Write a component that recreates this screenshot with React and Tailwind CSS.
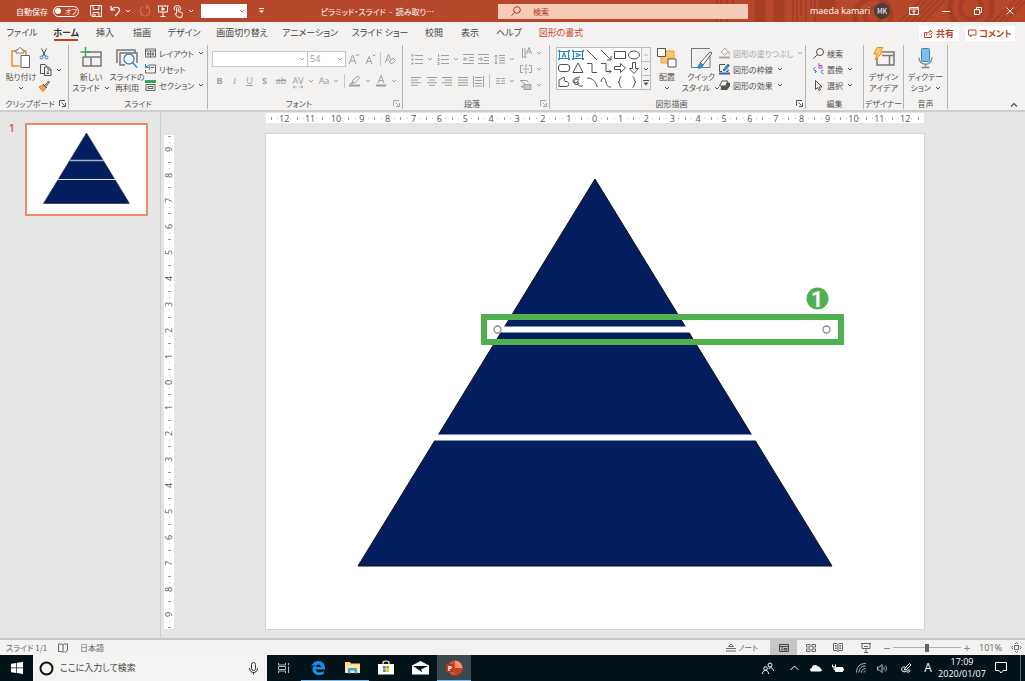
import { useState } from "react";

const tabs = [
  { label: "ファイル", width: "w-11" },
  { label: "ホーム", width: "w-11" },
  { label: "挿入", width: "w-[34px]" },
  { label: "描画", width: "w-10" },
  { label: "デザイン", width: "w-11" },
  { label: "画面切り替え", width: "w-[72px]" },
  { label: "アニメーション", width: "w-16" },
  { label: "スライド ショー", width: "w-[76px]" },
  { label: "校閲", width: "w-8" },
  { label: "表示", width: "w-10" },
  { label: "ヘルプ", width: "w-[38px]" },
  { label: "図形の書式", width: "w-[66px]" },
];

const Icon = ({ w = 12, h = 12, className = "", children }) => (
  <svg
    width={w}
    height={h}
    viewBox={`0 0 ${w} ${h}`}
    fill="none"
    stroke="currentColor"
    strokeWidth="1"
    className={`shrink-0 ${className}`}
    aria-hidden="true"
  >
    {children}
  </svg>
);

const Chevron = ({ className = "" }) => (
  <Icon w={6} h={4} className={className}>
    <path d="M1 1l2 2 2-2" />
  </Icon>
);

const Launcher = ({ className = "" }) => (
  <button aria-label="詳細" className={`absolute right-0.5 bottom-0.5 ${className}`}>
    <Icon w={7} h={7}>
      <path d="M.5 6V.5H6M2.500 2.500l3 3M6.500 3v3.500H3" />
    </Icon>
  </button>
);

const Group = ({ label, width, launcher, children }) => (
  <section className={`relative flex h-16 shrink-0 flex-col border-r border-[#b8b6b4] ${width}`}>
    <div className="flex h-[53px]">{children}</div>
    <div className="text-center text-[8px] leading-[11px] whitespace-nowrap text-[#555]">{label}</div>
    {launcher && <Launcher className={launcher} />}
  </section>
);

const BigButton = ({ icon, lines, arrow, width }) => (
  <button className={`flex h-[53px] shrink-0 flex-col items-center pt-0.5 ${width}`}>
    {icon}
    <span className="mt-0.5 text-[8px] leading-[11px] whitespace-nowrap">{lines[0]}</span>
    <span className="flex h-[11px] items-center gap-1 text-[8px] leading-[11px] whitespace-nowrap">
      {lines[1]}
      {arrow && <Chevron />}
    </span>
  </button>
);

const SmallButton = ({ icon, label, arrow, className = "" }) => (
  <button className={`flex h-4 items-center gap-[3px] text-[8px] leading-[11px] whitespace-nowrap ${className}`}>
    {icon}
    {label}
    {arrow && <Chevron className="ml-px" />}
  </button>
);

const ToolButton = ({ label, width, children }) => (
  <button aria-label={label} className={`flex h-4 shrink-0 items-center justify-center gap-1 ${width}`}>
    {children}
  </button>
);

const Divider = ({ className = "" }) => <span className={`h-[14px] w-px shrink-0 bg-[#c8c6c4] ${className}`} />;

const Lines = ({ rows }) => (
  <Icon w={11} h={11}>
    {rows.map(([x, len], i) => (
      <path key={i} d={`M${x} ${1.5 + i * 2.6}h${len}`} />
    ))}
  </Icon>
);

const TitleBar = () => (
  <header className="relative flex h-[22px] items-center overflow-hidden bg-[#b7472a] text-white">
    <svg className="absolute top-0 right-0" width="316" height="22" viewBox="0 0 316 22" fill="none" stroke="#9f3b21" aria-hidden="true">
      <path d="M8 0v22M12 0v22M18 0v22M24 0v14" strokeWidth="2" opacity=".7" />
      <path d="M51 0v22M70 0v22" strokeWidth="11" opacity=".7" />
      <path d="M84 0v22M88 0v22M92 0v16M97 0v22M102 0v12M106 0v22" strokeWidth="2" opacity=".7" />
      <circle cx="118" cy="4" r="9" fill="#9f3b21" stroke="none" opacity=".7" />
      <circle cx="164" cy="16" r="18" strokeWidth="5" opacity=".7" />
      <circle cx="164" cy="16" r="8" strokeWidth="4" opacity=".7" />
      <path d="M190 22l22-22M196 22l22-22M202 22l22-22M208 22l22-22M214 22l22-22" strokeWidth="2" opacity=".7" />
      <circle cx="262" cy="8" r="21" strokeWidth="5" opacity=".7" />
      <circle cx="262" cy="8" r="11" strokeWidth="4" opacity=".7" />
      <path d="M284 22l22-22M290 22l22-22M296 22l22-22" strokeWidth="2" opacity=".7" />
    </svg>
    <div className="relative flex w-[258px] shrink-0 items-center pl-4">
      <span className="w-[37px] text-[8px] leading-[11px] whitespace-nowrap">自動保存</span>
      <button className="flex h-[11px] w-[26px] items-center justify-center gap-1 rounded-full border border-white text-[7px] leading-[9px]">
        <span className="size-1.5 shrink-0 rounded-full bg-white" />
        オフ
      </button>
      <div className="ml-[10px] flex items-center">
        <ToolButton label="保存" width="w-[14px]">
          <Icon w={12} h={12}>
            <path d="M.5.5h11v11H2l-1.500-1.500zM3 .5v4h6v-4M3 11.500V7.500h6v4M5 9v2" />
          </Icon>
        </ToolButton>
        <ToolButton label="元に戻す" width="ml-1 w-[27px]">
          <Icon w={11} h={12}>
            <path d="M1 1v4h4M1.200 4.800C3.500 1.500 9.500 1.200 9.500 5c0 2-2 3.500-4.500 6" strokeWidth="1.200" />
          </Icon>
          <Chevron />
        </ToolButton>
        <ToolButton label="やり直し" width="w-[22px]">
          <Icon w={12} h={12} className="text-[#e0694c]">
            <path d="M7.500 4V1h3M8 1.500C12.500 4 11 11 6 11S-.5 4 4 1.500" strokeWidth="1.200" />
          </Icon>
        </ToolButton>
        <ToolButton label="最初から" width="w-[14px]">
          <Icon w={12} h={12}>
            <path d="M.5 1h11M1.500 1v6h9V1M6 7v4M3.500 11.500h5" />
            <path d="M5 2.500L7.500 4 5 5.500z" fill="currentColor" />
          </Icon>
        </ToolButton>
        <ToolButton label="タッチ/マウス モード" width="w-[27px]">
          <Icon w={11} h={13}>
            <path d="M1.800 5.500a3.200 3.200 0 1 1 5.200 0M3.500 8.500V3.300c0-1.200 1.800-1.200 1.800 0V6.500l3.500 1c1 .4.700 3-.3 4.800H5L2 9.300c0-1 1-1 1.500-.2z" />
          </Icon>
          <Chevron />
        </ToolButton>
      </div>
      <div className="relative ml-1 h-[14px] w-[46px] shrink-0 bg-white text-[#d9623b]">
        <select aria-label="スタイル" className="h-full w-full appearance-none outline-none">
          <option></option>
        </select>
        <Chevron className="pointer-events-none absolute top-[5px] right-0.5" />
      </div>
    </div>
    <div className="relative flex min-w-0 flex-1 items-center">
      <button aria-label="クイック アクセス ツール バーのユーザー設定">
        <Icon w={7} h={6}>
          <path d="M1 .5h5" />
          <path d="M1 2.500h5L3.500 5z" fill="currentColor" stroke="none" />
        </Icon>
      </button>
      <h1 className="flex-1 pr-2 text-center text-[8px] leading-[11px] whitespace-nowrap">
        ピラミッド・スライド&nbsp; -&nbsp; 読み取り…
      </h1>
    </div>
    <label className="relative flex h-[15px] w-[250px] shrink-0 items-center gap-3 bg-[#f8cbb9] pl-[13px] text-[#a33b20]">
      <Icon w={10} h={10}>
        <circle cx="6" cy="4" r="3.300" />
        <path d="M3.700 6.300L.5 9.500" />
      </Icon>
      <input
        type="text"
        aria-label="検索"
        placeholder="検索"
        className="min-w-0 flex-1 bg-transparent text-[8px] leading-[11px] outline-none placeholder:text-[#a33b20]"
      />
    </label>
    <div className="relative flex w-[277px] shrink-0 items-center pl-[62px]">
      <span className="w-16 font-['Open_Sans','Noto_Sans_CJK_JP',sans-serif] text-[9px] whitespace-nowrap">maeda kamari</span>
      <span className="flex size-4 items-center justify-center rounded-full bg-[#4a3f3a] text-[7px]">MK</span>
      <ToolButton label="リボンの表示オプション" width="w-12">
        <Icon w={10} h={8}>
          <path d="M.5.5h9v7h-9zM.5 2h9M5 7V3.500M3.500 5L5 3.500 6.500 5" />
        </Icon>
      </ToolButton>
      <ToolButton label="最小化" width="w-4">
        <Icon w={8} h={8}>
          <path d="M0 4.500h8" />
        </Icon>
      </ToolButton>
      <ToolButton label="元に戻す(縮小)" width="w-12">
        <Icon w={8} h={8}>
          <path d="M.5 2.500h5v5h-5zM2.500 2V.5h5v5H6" />
        </Icon>
      </ToolButton>
      <ToolButton label="閉じる" width="w-4">
        <Icon w={8} h={8}>
          <path d="M.5.5l7 7M7.500.5l-7 7" />
        </Icon>
      </ToolButton>
    </div>
  </header>
);

const TabBar = ({ active, onSelect }) => (
  <nav className="flex h-[22px] items-center bg-[#f3f2f1]">
    {tabs.map((tab) => (
      <button
        key={tab.label}
        onClick={() => onSelect(tab.label)}
        className={`relative h-full shrink-0 text-[9px] leading-[20px] whitespace-nowrap ${tab.width} ${
          active === tab.label ? "font-bold text-[#333]" : tab.label === "図形の書式" ? "text-[#c8482a]" : "text-[#444]"
        }`}
      >
        {tab.label}
        {active === tab.label && <span className="absolute inset-x-2.5 bottom-[3px] h-0.5 bg-[#c43e1c]" />}
      </button>
    ))}
    <div className="ml-auto flex gap-1.5 pr-[10px] text-[9px] leading-[15px] font-bold text-[#b7472a]">
      <button className="flex h-[15px] w-10 items-center justify-center gap-[3px] bg-white">
        <Icon w={9} h={9}>
          <path d="M3 3.500H.5v5h7V6M2.500 6.500c0-2.500 1-3.500 3.500-3.500V1l2.500 2.500L6 6V4.500" />
        </Icon>
        共有
      </button>
      <button className="flex h-[15px] w-[50px] items-center justify-center gap-0.5 bg-white whitespace-nowrap">
        <Icon w={9} h={9}>
          <path d="M.5 1h7.500v5H4L2.500 7.800V6h-2z" />
        </Icon>
        コメント
      </button>
    </div>
  </nav>
);

const shapes = [
  <g key="a" stroke="#2b7fc3"><path d="M1.500 2.500h9v7h-9z" /><path d="M4 8.500L6 3.500l2 5M4.800 7h2.400" /><path d="M0 1h2v2H0zM10 1h2v2h-2zM0 9h2v2H0zM10 9h2v2h-2z" fill="#2b9be0" stroke="none" /></g>,
  <g key="b" stroke="#2b7fc3"><path d="M1.500 2.500h9v7h-9z" /><path d="M3.500 4L8.500 6l-5 2M5 4.800v2.400" /><path d="M0 1h2v2H0zM10 1h2v2h-2zM0 9h2v2H0zM10 9h2v2h-2z" fill="#2b9be0" stroke="none" /></g>,
  <path key="c" d="M1 1l10 10" />,
  <path key="d" d="M1 1l10 10M11 7v4H7" />,
  <path key="e" d="M.5 2.500h11v7H.5z" />,
  <ellipse key="f" cx="6" cy="6" rx="5.500" ry="4" />,
  <rect key="g" x=".5" y="2.500" width="11" height="7" rx="2.500" />,
  <path key="h" d="M6 1l5 9.500H1z" />,
  <path key="i" d="M1 1.500h5v9h5" />,
  <path key="j" d="M1 1.500h5v8h5M9 7.500l2 2-2 2" />,
  <path key="k" d="M.5 4.500h6v-3L11.500 6l-5 4.500v-3h-6z" />,
  <path key="l" d="M4.500.5h3v6h3L6 11.500 1.500 6.500h3z" />,
  <path key="m" d="M1 10.500V4l5-3c2 0-1 4 1 4.500h2c2 1 3 5-1 5z" />,
  <path key="n" d="M8 1C3 1-1 5 2 6.500S9 2 5 3 1 8 4 8.500 8 6 6 6.500 7 12 11 9.500" />,
  <path key="o" d="M1 2c6 0 9 4 10 9" />,
  <path key="p" d="M1 6c1-6 4-5 5 0s3 5 5 5" />,
  <path key="q" d="M7.500.5C4.500.5 7 6 4 6c3 0 .5 5.500 3.500 5.500" />,
  <path key="r" d="M4.500.5C7.500.5 5 6 8 6c-3 0-.5 5.500-3.500 5.500" />,
];

const Ribbon = () => (
  <div className="relative flex h-[68px] border-b-2 border-[#d0cecc] bg-[#f3f2f1] pt-px text-[#505050]">
    <Group label="クリップボード" width="w-[69px] pr-2" launcher="text-[#555]">
      <BigButton
        width="w-[38px] ml-0.5"
        lines={["貼り付け", ""]}
        arrow
        icon={
          <Icon w={20} h={22}>
            <path d="M5 4H1v15h8M15 8V4h-4" stroke="#e8922c" strokeWidth="1.500" />
            <path d="M5 6V3h2c0-3 4-3 4 0h2v3z" fill="#fff" stroke="#777" />
            <path d="M10 8.500h8.500v12H10z" fill="#fff" stroke="#666" />
          </Icon>
        }
      />
      <div className="pt-px">
        <ToolButton label="切り取り" width="w-2">
          <Icon w={10} h={12}>
            <path d="M2.500.5l4 8M7.500.5l-4 8" />
            <circle cx="2.500" cy="9.500" r="1.500" stroke="#2b7fc3" />
            <circle cx="7.500" cy="9.500" r="1.500" stroke="#2b7fc3" />
          </Icon>
        </ToolButton>
        <ToolButton label="コピー" width="w-[22px]">
          <Icon w={12} h={12}>
            <path d="M4 9.500H.5v-9H5l2 2M4.500 3h4L11 5.500v6H4.500zM8 3v3h3M6.500 8h2.500M6.500 9.500h2.500" />
          </Icon>
          <Chevron />
        </ToolButton>
        <ToolButton label="書式のコピー" width="w-2">
          <Icon w={12} h={12}>
            <path d="M1 7l4-2 3 3-3 3.500z" fill="#f3a64c" stroke="#d9782c" />
            <path d="M5 4l4 4M7 5.500L10.500 1l1 1L8 6.500" />
          </Icon>
        </ToolButton>
      </div>
    </Group>

    <Group label="スライド" width="w-[139px]">
      <BigButton
        width="w-9 ml-1"
        lines={["新しい", "スライド"]}
        arrow
        icon={
          <Icon w={22} h={22}>
            <path d="M7 5h14v14H3v-9M3 10h18M11 10v9" stroke="#777" strokeWidth="1.500" />
            <path d="M5.500 0v10M.5 5h10" stroke="#3aa557" strokeWidth="1.500" />
          </Icon>
        }
      />
      <BigButton
        width="w-9"
        lines={["スライドの", "再利用"]}
        icon={
          <Icon w={22} h={22}>
            <path d="M2 15H1V3h18v3M9 18H4V6h17v10" stroke="#777" strokeWidth="1.500" />
            <circle cx="13" cy="12" r="5" fill="#fff" stroke="#2b8bd0" strokeWidth="1.300" />
            <path d="M16.500 15.500l4.500 5" stroke="#2b8bd0" strokeWidth="1.500" />
          </Icon>
        }
      />
      <div>
        <SmallButton
          label="レイアウト"
          arrow
          icon={<Icon w={11} h={10}><path d="M.5 1h10v8H.5zM.5 3h10M5.500 3v6M2.500 5h1.500v2H2.500zM7 5h1.500v2H7z" stroke="#666" /></Icon>}
        />
        <SmallButton
          label="リセット"
          icon={<Icon w={11} h={10}><path d="M4 1h6.500v8H.5V6M6 3.500h3" stroke="#666" /><path d="M.5 0v3.500H4M1 3c3-3 5 0 3 3" stroke="#2b7fc3" /></Icon>}
        />
        <SmallButton
          label="セクション"
          arrow
          icon={<Icon w={11} h={11}><path d="M0 1.500h11" stroke="#3aa557" strokeWidth="3" /><path d="M1 4.500h9v6H1zM3 6.500h5v2H3z" stroke="#666" /></Icon>}
        />
      </div>
    </Group>

    <Group label="フォント" width="w-[195px] pr-3" launcher="text-[#a9a7a5]">
      <div className="flex flex-col gap-1.5 pt-1.5 pl-1 text-[#a19f9d]">
        <div className="flex items-center">
          <div className="relative h-4 w-24 border border-[#c8c6c4] bg-white">
            <select aria-label="フォント" className="block h-full w-full appearance-none outline-none">
              <option></option>
            </select>
            <Chevron className="pointer-events-none absolute top-[5px] right-0.5" />
          </div>
          <div className="relative h-4 w-[38px] border border-l-0 border-[#c8c6c4] bg-white">
            <select
              aria-label="フォント サイズ"
              defaultValue="54"
              className="block h-full w-full appearance-none pl-0.5 font-['Open_Sans',sans-serif] text-[9px] leading-[14px] outline-none"
            >
              <option>54</option>
            </select>
            <Chevron className="pointer-events-none absolute top-[5px] right-0.5" />
          </div>
          <ToolButton label="フォント サイズの拡大" width="w-4">
            <Icon w={12} h={12}><path d="M1 11L4.500 2l3.500 9M2.200 8h4.600M8 3l1.500-2L11 3" /></Icon>
          </ToolButton>
          <ToolButton label="フォント サイズの縮小" width="w-4">
            <Icon w={12} h={12}><path d="M2 11l3-7.500L8 11M3 8.500h4M8.500 1.500L10 3l1.500-1.500" /></Icon>
          </ToolButton>
          <Divider className="ml-0.5" />
          <ToolButton label="書式のクリア" width="w-[18px]">
            <Icon w={12} h={12}><path d="M1 10L4.500 1.500l2 5M2.200 7h3M6 8l3-3 2.500 2.500-3 3H7L5.500 9z" /></Icon>
          </ToolButton>
        </div>
        <div className="flex items-center font-['Open_Sans',sans-serif] text-[9px] leading-4">
          <ToolButton label="太字" width="w-[15px]"><b>B</b></ToolButton>
          <ToolButton label="斜体" width="w-[15px]"><i className="font-['Liberation_Serif',serif]">I</i></ToolButton>
          <ToolButton label="下線" width="w-[15px]"><u>U</u></ToolButton>
          <ToolButton label="影" width="w-[15px]"><b>S</b></ToolButton>
          <ToolButton label="取り消し線" width="w-[18px]"><s>ab</s></ToolButton>
          <ToolButton label="文字の間隔" width="w-[26px]">
            <span className="relative leading-3">
              AV
              <Icon w={12} h={4} className="absolute -bottom-0.5 left-0"><path d="M3 .5l-2 1.500 2 1.500M1 2h4M9 .5l2 1.500-2 1.500M11 2H7" strokeWidth=".7" /></Icon>
            </span>
            <Chevron />
          </ToolButton>
          <ToolButton label="文字種の変換" width="w-[26px]">Aa<Chevron /></ToolButton>
          <Divider className="mx-0.5" />
          <ToolButton label="蛍光ペンの色" width="w-[26px]">
            <Icon w={12} h={12}><path d="M3 8l1-3 5-4 1.500 1.500L6.500 7.500zM1 8.500h3" /><path d="M0 10.500h11" strokeWidth="2" /></Icon>
            <Chevron />
          </ToolButton>
          <ToolButton label="フォントの色" width="w-[26px]">
            <Icon w={12} h={12}><path d="M3 8l3-7.500L9 8M4 5.500h4" /><path d="M1 10.500h10" strokeWidth="2" /></Icon>
            <Chevron />
          </ToolButton>
        </div>
      </div>
    </Group>

    <Group label="段落" width="w-[147px] pr-2" launcher="text-[#a9a7a5]">
      <div className="flex flex-col gap-1.5 pt-1.5 pl-1.5 text-[#a19f9d]">
        <div className="flex items-center">
          <ToolButton label="箇条書き" width="w-[26px]">
            <Icon w={12} h={11}><path d="M4 1.500h8M4 5.500h8M4 9.500h8" /><path d="M.5 1.500h2M.5 5.500h2M.5 9.500h2" strokeWidth="2" /></Icon>
            <Chevron />
          </ToolButton>
          <ToolButton label="段落番号" width="w-[26px]">
            <Icon w={12} h={11}><path d="M4 1.500h8M4 5.500h8M4 9.500h8M1.500 0v3M.5 4.500h1.500v2H.5M.5 8.500h1.500v2H.5" /></Icon>
            <Chevron />
          </ToolButton>
          <ToolButton label="インデントを減らす" width="w-[15px]">
            <Icon w={11} h={10}><path d="M0 .5h11M6 3.500h5M6 6.500h5M0 9.500h11M5 5H.5M2.500 3l-2 2 2 2" /></Icon>
          </ToolButton>
          <ToolButton label="インデントを増やす" width="w-[15px]">
            <Icon w={11} h={10}><path d="M0 .5h11M6 3.500h5M6 6.500h5M0 9.500h11M0 5h4.500M2.500 3l2 2-2 2" /></Icon>
          </ToolButton>
          <ToolButton label="行間" width="w-[26px]">
            <Icon w={11} h={11}><path d="M5 1.500h6M5 4h6M5 6.500h6M5 9h6M2 1v9M.5 2.500L2 1l1.500 1.500M.5 8.500L2 10l1.500-1.500" /></Icon>
            <Chevron />
          </ToolButton>
        </div>
        <div className="flex items-center">
          <ToolButton label="左揃え" width="w-[15px]"><Lines rows={[[0, 10], [0, 7], [0, 10], [0, 7]]} /></ToolButton>
          <ToolButton label="中央揃え" width="w-4"><Lines rows={[[0, 10], [2, 6], [0, 10], [2, 6]]} /></ToolButton>
          <ToolButton label="右揃え" width="w-[15px]"><Lines rows={[[0, 10], [3, 7], [0, 10], [3, 7]]} /></ToolButton>
          <ToolButton label="両端揃え" width="w-4"><Lines rows={[[0, 10], [0, 10], [0, 10], [0, 10]]} /></ToolButton>
          <ToolButton label="均等割り付け" width="w-[15px]">
            <Icon w={11} h={11}><path d="M.5 0v11M10.500 0v11M2 1.500h7M2 4.500h7M2 7.500h7M2 10h7" /></Icon>
          </ToolButton>
          <Divider className="mx-[3px]" />
          <ToolButton label="段の追加と削除" width="w-6">
            <Icon w={9} h={8}><path d="M0 1.500h4M0 4h4M0 6.500h4M5 1.500h4M5 4h4M5 6.500h4" /></Icon>
            <Chevron />
          </ToolButton>
        </div>
      </div>
      <div className="ml-1 text-[#a19f9d]">
        <ToolButton label="文字列の方向" width="w-5">
          <Icon w={11} h={12}><path d="M1.500 1v10M4 1v10M2.500 9.500L4 11l1.500-1.500M5.500 7L8 .5 10.500 7M6.500 5h3" /></Icon>
          <Chevron />
        </ToolButton>
        <ToolButton label="文字の配置" width="w-5">
          <Icon w={12} h={10}><path d="M3 1.500H.5v7H3M9 1.500h2.500v7H9M3 5h6M6 0v3.500M6 6.500V10" /></Icon>
          <Chevron />
        </ToolButton>
        <ToolButton label="SmartArt に変換" width="w-5">
          <Icon w={12} h={11}><path d="M0 .5h7l1 2M1 1l4 3-4 3h3" /><path d="M4 4.500h7v5H4z" fill="#c8c6c4" /></Icon>
          <Chevron />
        </ToolButton>
      </div>
    </Group>

    <Group label="図形描画" width="w-[256px] pr-3" launcher="text-[#555]">
      <div className="mt-[2px] ml-[6px] flex h-[43px] w-[95px] shrink-0 border border-[#c0bebc] bg-white">
        <div className="grid w-[84px] grid-cols-6 grid-rows-3 place-items-center">
          {shapes.map((shape, i) => (
            <button key={i} aria-label={`図形 ${i + 1}`}>
              <Icon w={12} h={12}>{shape}</Icon>
            </button>
          ))}
        </div>
        <div className="flex flex-1 flex-col divide-y divide-[#c0bebc] border-l border-[#c0bebc] bg-[#f3f2f1]">
          <button aria-label="上へ" className="flex flex-1 items-center justify-center text-[#bbb]"><Chevron className="rotate-180" /></button>
          <button aria-label="下へ" className="flex flex-1 items-center justify-center"><Chevron /></button>
          <button aria-label="その他" className="flex flex-1 items-center justify-center">
            <Icon w={6} h={6}><path d="M0 .5h6" /><path d="M.5 2.500h5L3 5.500z" fill="currentColor" stroke="none" /></Icon>
          </button>
        </div>
      </div>
      <BigButton
        width="w-8"
        lines={["配置", ""]}
        arrow
        icon={
          <Icon w={22} h={22}>
            <path d="M5 4h13v12H5z" fill="#f9c56c" stroke="#e8a03c" />
            <path d="M1.500 1.500h8v8h-8zM12 12h8v8h-8z" fill="#fff" stroke="#555" />
          </Icon>
        }
      />
      <BigButton
        width="w-9"
        lines={["クイック", "スタイル"]}
        arrow
        icon={
          <Icon w={22} h={22}>
            <path d="M20 8v12.500H1.500v-19h18.500" stroke="#777" fill="none" />
            <path d="M10 16L20 5l2 1-9 12z" fill="#fff" stroke="#555" />
            <path d="M7 20.500c2 0 1-4 4-4.500l2 2c0 3-4 4-6 2.500z" fill="#2b8bd0" stroke="#2b8bd0" />
          </Icon>
        }
      />
      <div>
        <SmallButton
          label="図形の塗りつぶし"
          arrow
          className="text-[#a9a7a5]"
          icon={<Icon w={11} h={12}><path d="M2 5l4-4 3.500 4-4 3zM9 4c2 2 1 3 1 4" /><path d="M0 10.500h11" strokeWidth="2" /></Icon>}
        />
        <SmallButton
          label="図形の枠線"
          arrow
          icon={<Icon w={11} h={12}><path d="M6 1.500H.5v7H3M9 6v2.500H7" /><path d="M4 7l5-6 1.500 1.500L5.500 8z" fill="#2b8bd0" stroke="#2b7fc3" /><path d="M0 10.500h11" stroke="#3b5f8f" strokeWidth="2" /></Icon>}
        />
        <SmallButton
          label="図形の効果"
          arrow
          icon={<Icon w={11} h={11}><path d="M4 3h6.500v3L8 9.500H2z" fill="#555" /><path d="M3 1h5.500L7 6H.5z" fill="#fff" /></Icon>}
        />
      </div>
    </Group>

    <Group label="編集" width="w-[58px]">
      <div className="pl-[7px]">
        <SmallButton label="検索" icon={<Icon w={11} h={11}><circle cx="7" cy="4" r="3.500" /><path d="M4.500 6.500L.5 10.500" /></Icon>} />
        <SmallButton
          label="置換"
          arrow
          icon={<Icon w={11} h={12}><path d="M6 0v5h3V2.500H6" stroke="#a64db8" /><path d="M2.500 4.500C0 5 .5 8 3 8.500M2 7l1.500 1.500L2 10M10.500 7.500c-3-1-3 3.500 0 3" stroke="#2b7fc3" /></Icon>}
        />
        <SmallButton label="選択" arrow icon={<Icon w={11} h={11}><path d="M2.500.5v9l2-2 1.500 3 1.500-.8L6 7h3z" /></Icon>} />
      </div>
    </Group>

    <Group label="デザイナー" width="w-10">
      <BigButton
        width="w-full"
        lines={["デザイン", "アイデア"]}
        icon={
          <Icon w={22} h={22}>
            <path d="M9 5h12v13H4v-7M9 8.500h12M16.500 8.500V18" stroke="#777" strokeWidth="1.500" />
            <path d="M4 .5h6L7.500 5H10L2 13l2-6H.8z" fill="#fbc56a" stroke="#e8922c" />
          </Icon>
        }
      />
    </Group>

    <Group label="音声" width="w-11">
      <BigButton
        width="w-full"
        lines={["ディクテー", "ション"]}
        arrow
        icon={
          <Icon w={22} h={22}>
            <rect x="6.500" y="1.500" width="8" height="13" rx="1" fill="#83bdec" stroke="#2b8bd0" />
            <path d="M4 10.500c0 9 13 9 13 0M10.500 17v3.500M6.500 20.500h8" stroke="#888" strokeWidth="1.300" />
          </Icon>
        }
      />
    </Group>
    <button aria-label="リボンを折りたたむ" className="mt-auto mr-[7px] mb-0.5 ml-auto">
      <Icon w={8} h={6}><path d="M1 4.500l3-3 3 3" strokeWidth="1.200" /></Icon>
    </button>
  </div>
);

// Marks between two figures: dot, half-way tick, dot
const buildMarks = (max) => {
  const marks = ["tick"];
  for (let n = -max; n <= max; n++) {
    marks.push("dot", Math.abs(n), "dot", "tick");
  }
  return marks;
};

const Ruler = ({ max, vertical }) => (
  <div
    className={`flex shrink-0 overflow-hidden bg-white font-['Open_Sans',sans-serif] text-[9px] leading-none text-[#555] ${
      vertical ? "w-[10px]" : "h-[10px] px-0.5"
    }`}
  >
    <div className={`flex flex-1 ${vertical ? "-my-0.5 flex-col" : ""}`}>
      {buildMarks(max).map((mark, i) => (
        <span key={i} className="flex min-h-0 min-w-0 flex-1 items-center justify-center">
          {mark === "tick" && <span className={`shrink-0 bg-[#999] ${vertical ? "h-px w-[3px]" : "h-[3px] w-px"}`} />}
          {mark === "dot" && <span className="size-px shrink-0 bg-[#bbb]" />}
          {typeof mark === "number" && <span className={vertical ? "-rotate-90" : ""}>{mark}</span>}
        </span>
      ))}
    </div>
  </div>
);

const Thumbnails = () => (
  <aside className="flex w-[161px] shrink-0 items-start border-r border-[#cfcdcb] pt-[11px] pl-[9px]">
    <span className="w-4 font-['Open_Sans',sans-serif] text-[10px] leading-[10px] font-semibold text-[#d9532c]">1</span>
    <button aria-label="スライド 1" className="w-[123px] border-2 border-[#ee8a6c] bg-white">
      <svg viewBox="0 0 119 89" className="block w-full">
        <path d="M59.500 8l43 70.500h-86z" fill="#021e5e" stroke="#222" strokeWidth=".6" />
        <path d="M43 35.500h34" stroke="#a9b3cb" strokeWidth="1.500" />
        <path d="M30 54.500h59" stroke="#e8ebf3" strokeWidth="1.200" />
      </svg>
    </button>
  </aside>
);

const Slide = () => (
  <svg viewBox="0 0 658 495" className="block w-full bg-white outline outline-[#d6d4d2]">
    <path d="M329 45l237 387H92z" fill="#021e5e" stroke="#111" strokeWidth="1" />
    <path d="M232 195.500h194" stroke="#fff" strokeWidth="6" />
    <path d="M166 303.500h326" stroke="#fff" strokeWidth="6" />
    <circle cx="231.500" cy="195.500" r="3.500" fill="#fff" stroke="#8a8a8a" strokeWidth="1.300" />
    <circle cx="560.500" cy="195.500" r="3.500" fill="#fff" stroke="#8a8a8a" strokeWidth="1.300" />
    <rect x="218" y="183" width="357" height="25" fill="none" stroke="#4fb04f" strokeWidth="6" />
    <circle cx="551.500" cy="164.500" r="11" fill="#4fb04f" />
    <text x="551" y="172.500" textAnchor="middle" fill="#fff" fontSize="22" fontWeight="bold" fontFamily="Roboto, sans-serif">
      1
    </text>
  </svg>
);

const StatusBar = ({ zoom, onZoom }) => (
  <footer className="flex h-[17px] items-center border-t-2 border-[#cbc9c7] bg-[#f3f2f1] pl-[6px] text-[8px] leading-[15px] text-[#666]">
    <span className="w-[52px] whitespace-nowrap">スライド 1/1</span>
    <Icon w={10} h={10}><path d="M5 2L3.500 1H.5v7.500h3L5 9.500M5 2l1.500-1h3v6M5 2v7.500M6.500 8.500l1 1 2-2.500" /></Icon>
    <span className="ml-3">日本語</span>
    <button className="ml-auto flex w-[44px] items-center gap-0.5 whitespace-nowrap">
      <Icon w={10} h={9}><path d="M0 5.500h10M0 8h10M2.500 3.500L5 1l2.500 2.500z" /></Icon>
      ノート
    </button>
    <button aria-label="標準" className="flex h-full w-[27px] items-center justify-center bg-[#c8c6c4] text-[#444]">
      <Icon w={10} h={8}><path d="M.5.5h9v7h-9zM.5 2.500h9M3 2.500v5M5 4.500h3v1.500H5z" /></Icon>
    </button>
    <button aria-label="スライド一覧" className="flex w-[27px] justify-center">
      <Icon w={10} h={8}><path d="M.5.5h3.500v2.500H.5zM6 .5h3.500v2.500H6zM.5 5h3.500v2.500H.5zM6 5h3.500v2.500H6z" /></Icon>
    </button>
    <button aria-label="閲覧表示" className="flex w-[27px] justify-center">
      <Icon w={10} h={9}><path d="M5 1.500L4 .5H.5v7H4l1 1 1-1h3.500v-7H6zM5 1.500v7M2 2.500h1.500M2 4h1.500M2 5.500h1.500M6.500 2.500H8M6.500 4H8M6.500 5.500H8" /></Icon>
    </button>
    <button aria-label="スライド ショー" className="flex w-[30px] justify-center">
      <Icon w={10} h={10}><path d="M0 .5h10M1 .5v5h8v-5M5 5.500v4M3 9.500h4M3 3.500h4" /></Icon>
    </button>
    <button aria-label="縮小" onClick={() => onZoom(zoom - 10)} className="flex w-3 justify-center text-[#888]">
      <Icon w={6} h={6}><path d="M0 3.500h6" /></Icon>
    </button>
    <input
      type="range"
      aria-label="ズーム"
      min="1"
      max="201"
      value={zoom}
      onChange={(e) => onZoom(Number(e.target.value))}
      className="h-[10px] w-[68px] appearance-none bg-transparent bg-[linear-gradient(#b3b1af,#b3b1af)] bg-[length:100%_1px] bg-center bg-no-repeat [&::-webkit-slider-thumb]:h-2 [&::-webkit-slider-thumb]:w-1 [&::-webkit-slider-thumb]:appearance-none [&::-webkit-slider-thumb]:bg-[#666]"
    />
    <button aria-label="拡大" onClick={() => onZoom(zoom + 10)} className="flex w-3 justify-center text-[#888]">
      <Icon w={6} h={6}><path d="M0 3.500h6M3 .5v6" /></Icon>
    </button>
    <span className="w-[38px] pl-1.5 font-['Open_Sans',sans-serif] text-[9px]">{zoom}%</span>
    <button aria-label="ウィンドウに合わせる" className="w-[14px]">
      <Icon w={11} h={11}><path d="M3.500 3.500h4v4h-4zM4 2l1.500-1.500L7 2M4 9l1.500 1.500L7 9M2 4L.5 5.500 2 7M9 4l1.500 1.500L9 7" /></Icon>
    </button>
  </footer>
);

const TaskButton = ({ label, running, active, children }) => (
  <button
    aria-label={label}
    className={`flex h-full w-[34px] items-center justify-center border-b ${running ? "border-[#76b9ed]" : "border-transparent"} ${
      active ? "bg-[#3b494f]" : ""
    }`}
  >
    {children}
  </button>
);

const Taskbar = () => (
  <div className="flex h-[26px] items-center bg-[#02141a] text-white">
    <button aria-label="スタート" className="flex w-[33px] justify-center">
      <svg width="12" height="12" viewBox="0 0 12 12" fill="#fff" aria-hidden="true">
        <path d="M0 1.700L5.300.9v4.700H0zM6 .8L12 0v5.600H6zM0 6.300h5.300V11L0 10.300zM6 6.300h6V12l-6-.9z" />
      </svg>
    </button>
    <label className="flex h-full w-[234px] items-center gap-1.5 bg-[#f3f3f2] pr-[9px] pl-[6px] text-[#333]">
      <Icon w={15} h={15}><circle cx="7.500" cy="7.500" r="6" stroke="#111" strokeWidth="2" /></Icon>
      <input
        type="text"
        aria-label="ここに入力して検索"
        placeholder="ここに入力して検索"
        className="min-w-0 flex-1 bg-transparent text-[9px] outline-none placeholder:text-[#444]"
      />
      <Icon w={9} h={13}><rect x="2.500" y=".5" width="4" height="8" rx="2" /><path d="M.5 6c0 6 8 6 8 0M4.500 10.500v2" /></Icon>
    </label>
    <TaskButton label="タスク ビュー">
      <Icon w={12} h={12} className="text-[#bbb]"><path d="M.5 1v2h7V1M.5 4.500h7v3h-7zM.5 11v-2h7v2M10.500 1v2M10.500 4.500v6.500" /></Icon>
    </TaskButton>
    <TaskButton label="Edge" running>
      <svg width="14" height="14" viewBox="0 0 14 14" aria-hidden="true">
        <path d="M.3 6.200C1 2 4 0 7.200 0 11.500 0 14 3 14 7v1.500H4.800c.2 3 4.700 3.700 8 1.700v2.700C8 15.500 1.300 13.500 1.500 8.200 1.600 5.800 3 4.500 4.500 3.800 2.500 4 1 5 .3 6.200zM4.900 6h4.900c0-3.500-4.500-3.300-4.900 0z" fill="#1e88e5" />
      </svg>
    </TaskButton>
    <TaskButton label="エクスプローラー" running>
      <svg width="15" height="13" viewBox="0 0 15 13" aria-hidden="true">
        <path d="M0 1h5l1 1.500h9V12H0z" fill="#ffd874" />
        <path d="M0 4h15v8H0z" fill="#ffe79f" />
        <path d="M3 7h9v5.500h-2.500V9.500h-4v3H3z" fill="#3fa3e8" />
      </svg>
    </TaskButton>
    <TaskButton label="ストア">
      <svg width="16" height="16" viewBox="0 0 16 16" aria-hidden="true">
        <path d="M5 5V2.500C5 .5 11 .5 11 2.500V5" fill="none" stroke="#fff" strokeWidth="1.200" />
        <path d="M0 4h16v10.500H0z" fill="#fff" />
        <path d="M5 6h2.700v2.700H5z" fill="#f25022" />
        <path d="M8.300 6H11v2.700H8.300z" fill="#7fba00" />
        <path d="M5 9.300h2.700V12H5z" fill="#00a4ef" />
        <path d="M8.300 9.300H11V12H8.300z" fill="#ffb900" />
      </svg>
    </TaskButton>
    <TaskButton label="メール">
      <svg width="17" height="14" viewBox="0 0 17 14" aria-hidden="true">
        <path d="M0 4.500L8.500 0 17 4.500V13.500H0z" fill="#fff" />
        <path d="M1 5h15L9 8.500l1.500 3z" fill="#02141a" />
      </svg>
    </TaskButton>
    <TaskButton label="PowerPoint" running active>
      <svg width="17" height="16" viewBox="0 0 17 16" aria-hidden="true">
        <circle cx="9" cy="8" r="7.500" fill="#d35230" />
        <path d="M9 .5A7.500 7.500 0 0 1 16.500 8H9z" fill="#ff8f6b" />
        <path d="M9 15.500A7.500 7.500 0 0 0 16.500 8H9z" fill="#c43e1c" />
        <rect x="0" y="4" width="8" height="8" rx="1" fill="#b7391a" />
        <text x="4" y="10.500" textAnchor="middle" fontSize="7" fontWeight="bold" fill="#fff" fontFamily="Open Sans, sans-serif">P</text>
      </svg>
    </TaskButton>

    <div className="ml-auto flex items-center">
      <ToolButton label="People" width="w-[27px]">
        <Icon w={12} h={13}><circle cx="8" cy="3" r="2" /><circle cx="3.500" cy="6.500" r="1.800" /><path d="M.5 12c0-5 6-5 6 0M6.500 7c1-2 4.500-2 5 2" /></Icon>
      </ToolButton>
      <ToolButton label="隠れているインジケーター" width="w-[26px]">
        <Icon w={9} h={6}><path d="M.5 5l4-4 4 4" /></Icon>
      </ToolButton>
      <ToolButton label="OneDrive" width="w-[18px]">
        <svg width="12" height="8" viewBox="0 0 12 8" fill="#fff" aria-hidden="true">
          <path d="M2 7.500C-.5 7.500-.5 4 1.800 4 2 .8 6-.2 7.500 2.300c2 0 2.500 1 2.500 2 2.500.3 2.500 3.200 0 3.200z" />
        </svg>
      </ToolButton>
      <ToolButton label="バッテリー" width="w-[26px]">
        <Icon w={12} h={9}><path d="M3.500 3.500h7v4h-7z" fill="#fff" /><path d="M11.500 4.500v2M.5.5v2.500h3V.5M2 3v2.500h1.500" /></Icon>
      </ToolButton>
      <ToolButton label="Wi-Fi" width="w-[19px]">
        <Icon w={10} h={10} className="text-[#b8bec0]"><path d="M.5 9.500C.5 4 4 .5 9.500.5M3 9.500C3 5.500 5.500 3 9.500 3M5.500 9.500c0-2.500 1.500-4 4-4M8 9.500c0-1 .5-1.500 1.500-1.500" /></Icon>
      </ToolButton>
      <ToolButton label="音量" width="w-[24px]">
        <Icon w={11} h={9} className="text-[#b8bec0]"><path d="M.5 3h2L5 .5v8L2.500 6h-2zM6.500 3c1 1 1 2 0 3M8 1.500c2 2 2 4 0 6" /></Icon>
      </ToolButton>
      <ToolButton label="Windows Ink" width="w-[24px]">
        <Icon w={11} h={10}><path d="M4 5l4.500-4.500L10 2 5.500 6.500 3.500 7zM4 4C1 3-1 7 2 8.500S7 6 8.500 7 8 9.500 6 9" /></Icon>
      </ToolButton>
      <ToolButton label="入力モード" width="w-[20px]">
        <span className="font-['Open_Sans',sans-serif] text-[12px] leading-4">A</span>
      </ToolButton>
      <div className="w-12 text-center font-['Open_Sans',sans-serif] text-[9px] leading-3 whitespace-nowrap">
        <div>17:09</div>
        <div>2020/01/07</div>
      </div>
      <ToolButton label="通知" width="w-[30px]">
        <Icon w={12} h={12}><path d="M.5.5h11v8H8L6 11 4 8.500H.5z" /></Icon>
      </ToolButton>
      <span className="mr-1 ml-1 h-[26px] w-px bg-[#5d6a6f]" />
    </div>
  </div>
);

export default function App() {
  const [activeTab, setActiveTab] = useState("ホーム");
  const [zoom, setZoom] = useState(101);

  return (
    <div
      lang="ja"
      className="flex min-h-screen flex-col bg-[#e6e6e6] font-['Noto_Sans_CJK_JP',sans-serif] [font-feature-settings:'palt']"
    >
      <TitleBar />
      <TabBar active={activeTab} onSelect={setActiveTab} />
      <Ribbon />
      <main className="flex flex-1">
        <Thumbnails />
        <div className="flex flex-1 items-start pt-px pr-[101px] pl-[3px]">
          <div className="mt-[22px] flex self-stretch pb-[9px]">
            <Ruler max={9} vertical />
          </div>
          <div className="ml-[92px] flex-1">
            <Ruler max={12} />
            <div className="mt-[11px]">
              <Slide />
            </div>
          </div>
        </div>
      </main>
      <StatusBar zoom={zoom} onZoom={setZoom} />
      <Taskbar />
    </div>
  );
}
